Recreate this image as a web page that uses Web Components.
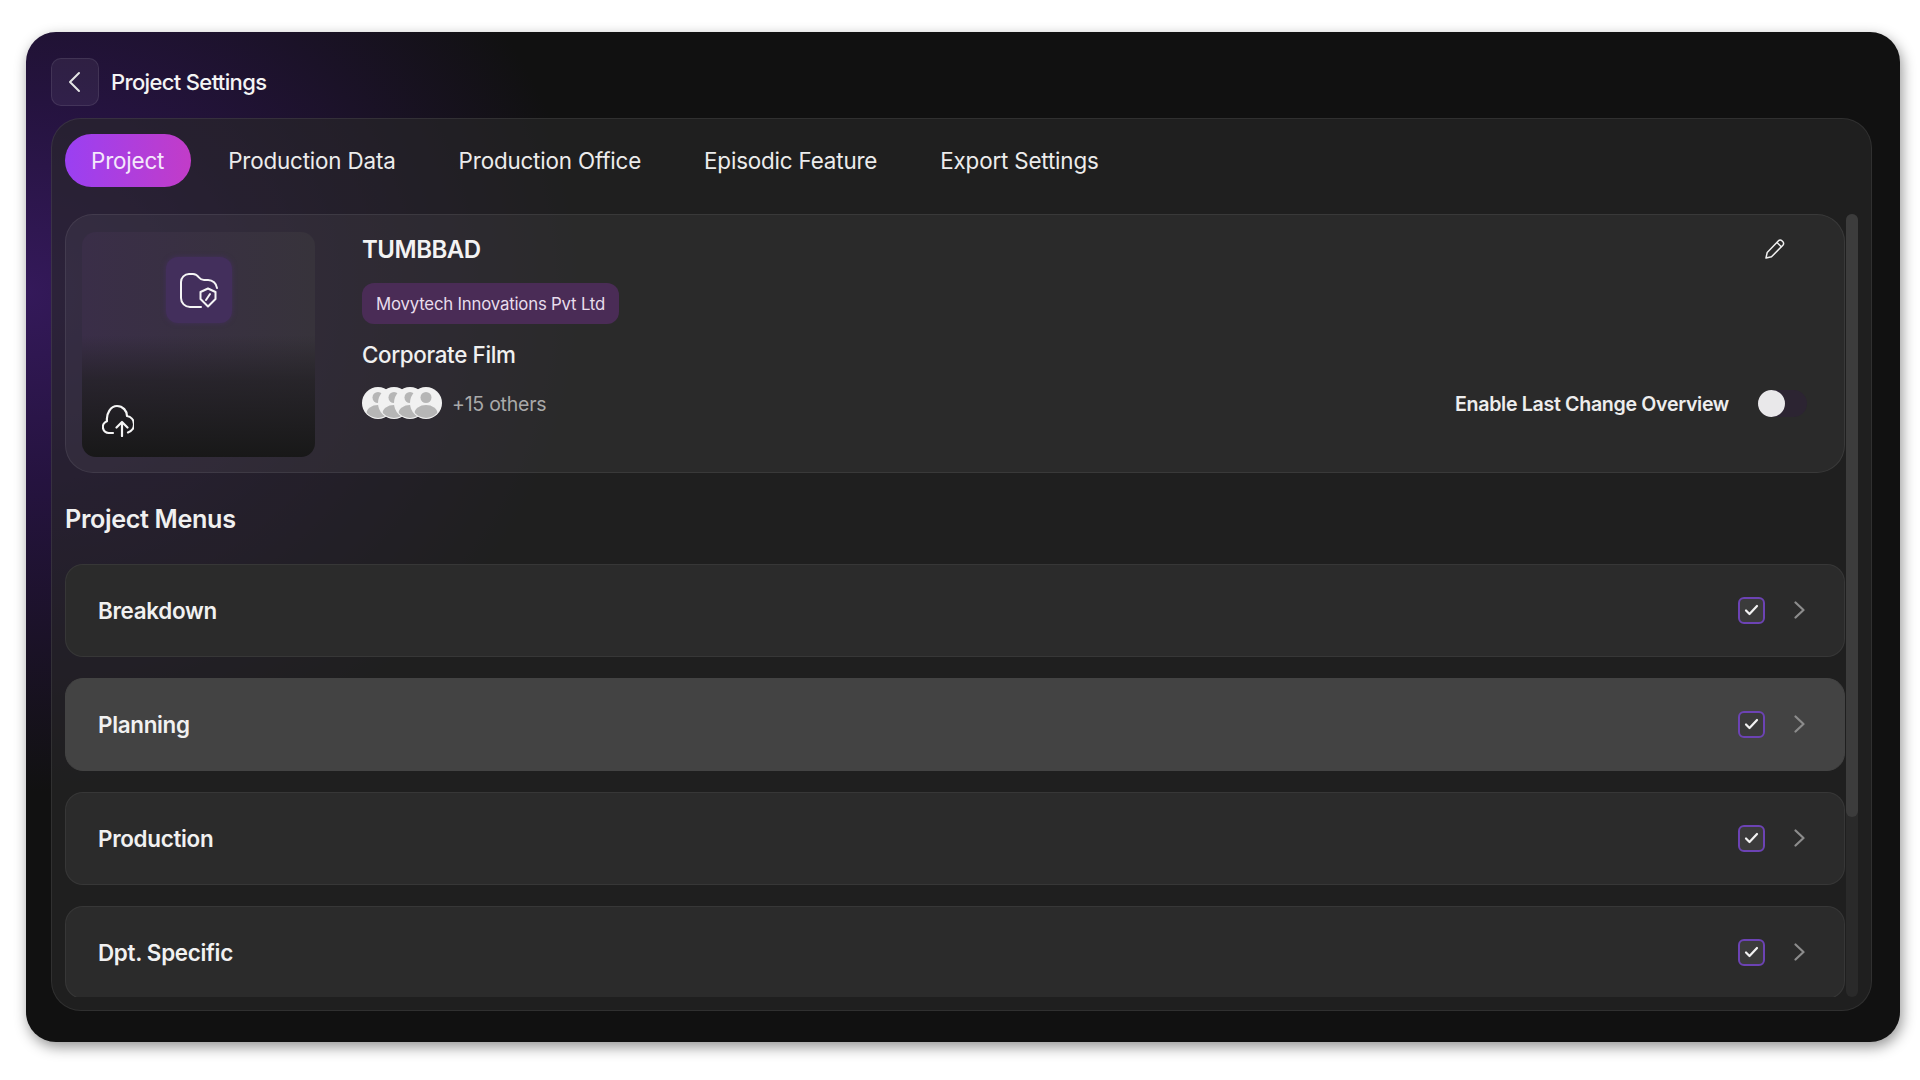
<!DOCTYPE html>
<html lang="en"><head><meta charset="utf-8"><title>Project Settings</title>
<style>
html,body{margin:0;padding:0;background:#fff;height:1080px;overflow:hidden;font-family:Inter,"Noto Sans",sans-serif;color:#f2f2f2}
</style></head><body>
<settings-window>
  <settings-header slot="header">Project Settings</settings-header>
  <tab-bar slot="tabs">
    <tab-item active>Project</tab-item>
    <tab-item>Production Data</tab-item>
    <tab-item>Production Office</tab-item>
    <tab-item>Episodic Feature</tab-item>
    <tab-item>Export Settings</tab-item>
  </tab-bar>
  <project-card name="TUMBBAD" company="Movytech Innovations Pvt Ltd" kind="Corporate Film" others="+15 others" toggle="Enable Last Change Overview"></project-card>
  <section-title>Project Menus</section-title>
  <menu-list>
    <menu-row>Breakdown</menu-row>
    <menu-row hot>Planning</menu-row>
    <menu-row>Production</menu-row>
    <menu-row>Dpt. Specific</menu-row>
  </menu-list>
</settings-window>
<script>
const el=(name,html)=>{customElements.define(name,class extends HTMLElement{constructor(){super();this.attachShadow({mode:'open'}).innerHTML=typeof html==='function'?html(this):html}connectedCallback(){if(typeof html==='function')this.shadowRoot.innerHTML=html(this)}})};

el('settings-window',`<style>
:host{display:block;margin:32px 20px 0 26px;width:1874px;height:1010px;box-sizing:border-box;padding:26px 28px 31px 25px;border-radius:30px;
background:radial-gradient(ellipse 560px 500px at 0 260px,#34195a 0,#25133f 38%,rgba(17,17,17,0) 100%),#111;
box-shadow:2px 5px 14px rgba(0,0,0,.42)}
.panel{margin-top:12px;height:893px;box-sizing:border-box;border:1px solid rgba(255,255,255,.075);border-radius:30px;background:rgba(40,40,40,.62);padding:15px 13px 13px 13px;display:flex;flex-direction:column}
.body{margin-top:27px;flex:1;min-height:0;display:flex;gap:1px}
.scroll{flex:1;min-width:0;overflow:hidden}
.bar{width:12px;flex:none;border-radius:6px;background:#2a2a2a;display:flex}
.thumb{flex:none;width:100%;height:603px;border-radius:6px;background:#3c3c3c}
</style>
<slot name="header"></slot>
<div class="panel"><slot name="tabs"></slot>
<div class="body"><div class="scroll"><slot></slot></div><div class="bar"><div class="thumb"></div></div></div></div>`);

el('settings-header',`<style>
:host{display:flex;align-items:center;gap:12px;height:48px;font-size:22px;font-weight:500;letter-spacing:-.65px;color:#f4f4f4}
.back{width:48px;height:48px;box-sizing:border-box;border:1px solid rgba(255,255,255,.09);background:rgba(255,255,255,.06);border-radius:10px;display:flex;align-items:center;justify-content:center}
</style><div class="back"><svg width="14" height="22" viewBox="0 0 14 22" fill="none" stroke="#e4e4e4" stroke-width="2" stroke-linecap="round" stroke-linejoin="round"><path d="M11 2 2 11l9 9"/></svg></div><span><slot></slot></span>`);

el('tab-bar',`<style>:host{display:flex;gap:11px;height:53px}</style><slot></slot>`);
el('tab-item',`<style>
:host{display:flex;align-items:center;padding:0 26px 1px;box-sizing:border-box;height:53px;border-radius:27px;font-size:22.4px;font-weight:400;letter-spacing:-.17px;color:#ececec;white-space:nowrap}
:host([active]){padding-right:27px;background:linear-gradient(90deg,#9a40f2 0,#c23cc8 100%);color:#f4e8fb}
</style><slot></slot>`);

el('avatar-stack',`<style>
:host{display:flex;flex-direction:row-reverse;justify-content:flex-end;width:80px;height:32px}
svg{width:32px;height:32px;flex:none;margin-left:-16px;display:block}
svg:last-child{margin-left:0}
</style>`+Array(4).fill(`<svg viewBox="0 0 32 32"><defs><clipPath id="c"><circle cx="16" cy="16" r="15"/></clipPath></defs><circle cx="16" cy="16" r="16" fill="#f1f1f1"/><g clip-path="url(#c)" fill="#b6b6b6"><circle cx="16" cy="10.500" r="5.500"/><ellipse cx="16" cy="26.500" rx="11.500" ry="8.500"/></g></svg>`).join(''));

el('toggle-switch',`<style>
:host{display:flex;align-items:center;width:49px;height:27px;border-radius:14px;background:#2c2432}
i{display:block;width:27px;height:27px;border-radius:50%;background:#e9e8ea}
</style><i></i>`);

el('project-card',h=>`<style>
:host{display:flex;box-sizing:border-box;height:259px;padding:17px 37px 16px 16px;gap:47px;border:1px solid rgba(255,255,255,.07);border-radius:28px;background:rgba(255,255,255,.05)}
.thumb{width:233px;height:225px;flex:none;border-radius:14px;background:linear-gradient(180deg,rgba(24,24,24,0) 0,rgba(24,24,24,0) 46%,rgba(34,32,36,.75) 66%,#181818 100%),linear-gradient(90deg,#3a2e48,#37333b);display:flex;flex-direction:column;align-items:center;position:relative}
.folder{margin-top:25px;width:66px;height:66px;border-radius:12px;background:#432f5c;box-shadow:0 0 5px #432f5c;display:flex;align-items:center;justify-content:center}
.cloud{position:absolute;left:20px;bottom:20px;display:block}
.info{flex:1;min-width:0;display:flex;flex-direction:column;align-items:flex-start}
.row{align-self:stretch;display:flex;justify-content:space-between;align-items:center}
.name{height:36px;line-height:36px;font-size:24px;font-weight:600;letter-spacing:-.5px;color:#f3f3f3}
.tag{margin-top:15px;height:41px;box-sizing:border-box;padding:0 14px;border-radius:12px;background:#4a2c56;display:flex;align-items:center;font-size:16.8px;font-weight:400;letter-spacing:-.2px;color:#e8dcec}
.kind{margin-top:16px;height:30px;line-height:30px;font-size:22.4px;font-weight:500;letter-spacing:-.35px;color:#f0f0f0}
.bottom{margin-top:17px}
.left,.right{display:flex;align-items:center}
.left{gap:10px}
.others{font-size:19.5px;letter-spacing:-.25px;color:#a9a9a9;position:relative;top:1px}
.right{gap:29px}
.lbl{font-size:19.6px;font-weight:600;letter-spacing:-.32px;color:#ededed;position:relative;top:1px}
.pen{margin-right:22px;position:relative;top:-1px}
</style>
<div class="thumb"><div class="folder"><svg width="38" height="35" viewBox="0 0 38 35" fill="none" stroke="#f5f5f5" stroke-width="2" stroke-linecap="round" stroke-linejoin="round"><path d="M21 34H10a9 9 0 0 1-9-9V9a8 8 0 0 1 8-8h4c3 0 4.500 1.500 6 3.500S21 7 24 7h4a9 9 0 0 1 9 8"/><path d="M28 15.500l7.500 3.500v7L28 33.500 20.500 26v-7z" fill="#432f5c"/><path d="M26 27l4-6"/></svg></div>
<svg class="cloud" width="32" height="33" viewBox="0 0 32 33" fill="none" stroke="#f5f5f5" stroke-width="2.200" stroke-linecap="round" stroke-linejoin="round"><path d="M11 29H7a6 6 0 0 1-2-11.700C4 9 9 2 15 2c6 0 10 5 10 10a8.500 8.500 0 0 1 1 16.500"/><path d="M20 32V18M14.500 23.500 20 18l5.500 5.500"/></svg></div>
<div class="info">
<div class="row name"><span>${h.getAttribute('name')}</span><svg class="pen" width="20" height="20" viewBox="0 0 20 20" fill="none" stroke="#f0f0f0" stroke-width="1.500" stroke-linejoin="round"><path d="M1 19l1.200-5.500L13.500 1.800a2.400 2.400 0 0 1 3.400 0l1 1a2.400 2.400 0 0 1 0 3.400L6.500 17.800z"/><path d="M12 3.500l4.500 4.500"/></svg></div>
<div class="tag">${h.getAttribute('company')}</div>
<div class="kind">${h.getAttribute('kind')}</div>
<div class="row bottom"><div class="left"><avatar-stack></avatar-stack><span class="others">${h.getAttribute('others')}</span></div><div class="right"><span class="lbl">${h.getAttribute('toggle')}</span><toggle-switch></toggle-switch></div></div>
</div>`);

el('section-title',`<style>:host{display:block;height:31px;line-height:31px;padding:31px 0 29px;font-size:25.2px;font-weight:600;letter-spacing:-.35px;color:#f0f0f0}</style><slot></slot>`);
el('menu-list',`<style>:host{display:flex;flex-direction:column;gap:21px}</style><slot></slot>`);

el('menu-row',`<style>
:host{display:flex;flex:none;align-items:center;box-sizing:border-box;height:93px;padding:0 39px 1px 32px;border:1px solid rgba(255,255,255,.06);border-radius:18px;background:#2b2b2b;font-size:22.4px;font-weight:600;letter-spacing:-.3px;color:#f1f1f1}
:host([hot]){background:#434343;border-color:#434343}
.t{flex:1}
.c{width:27px;height:27px;box-sizing:border-box;border:2px solid #6c43b4;border-radius:6px;background:#3b3b3b;display:flex;align-items:center;justify-content:center}
.a{margin-left:29px;display:block}
</style><span class="t"><slot></slot></span><div class="c"><svg width="15" height="12" viewBox="0 0 15 12" fill="none" stroke="#f2f2f2" stroke-width="2.200" stroke-linecap="round" stroke-linejoin="round"><path d="M2 6.500l3.500 3.500L13 2"/></svg></div><svg class="a" width="11" height="18" viewBox="0 0 11 18" fill="none" stroke="#8c8c8c" stroke-width="2.200" stroke-linecap="round" stroke-linejoin="round"><path d="M1.500 1.500 9.500 9l-8 7.500"/></svg>`);
</script>
</body></html>
